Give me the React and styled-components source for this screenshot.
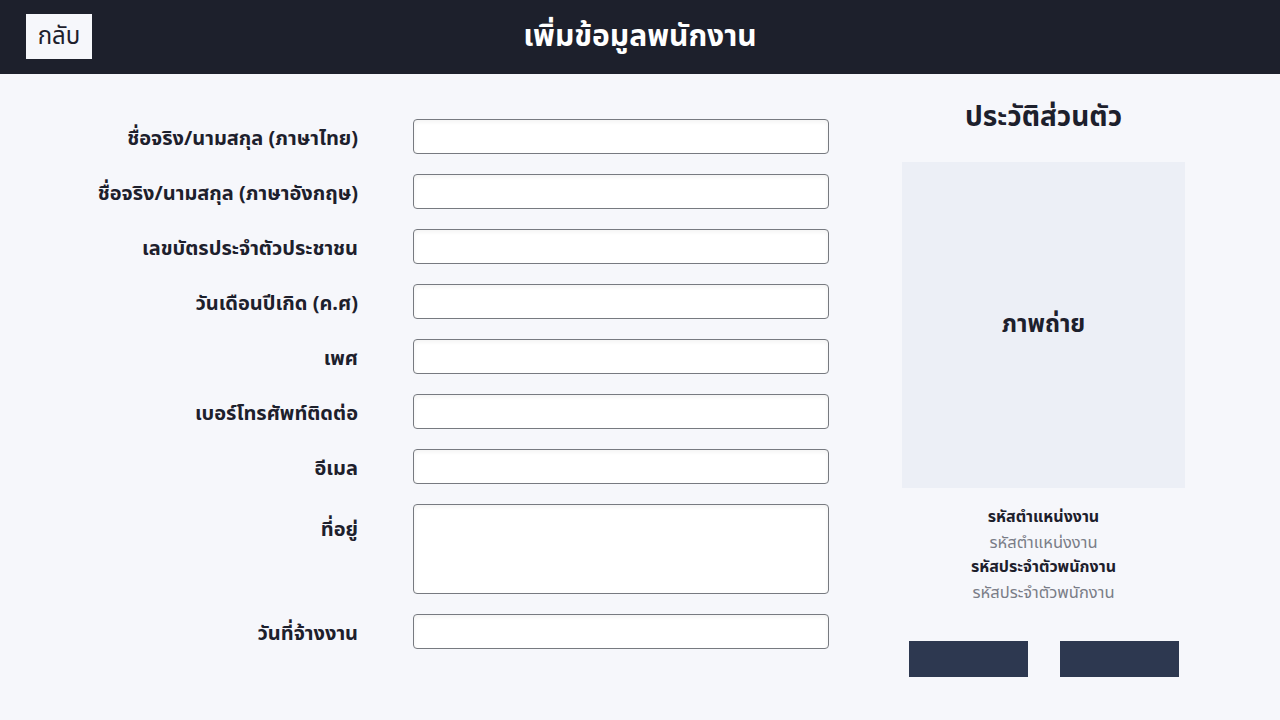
import styled, { createGlobalStyle } from "styled-components";

const GlobalStyle = createGlobalStyle`
  * { box-sizing: border-box; }
  body {
    margin: 0;
    background: #f6f7fb;
    font-family: "Noto Sans Thai", "Noto Sans", "DejaVu Sans", sans-serif;
    color: #1d202c;
  }
`;

const Header = styled.header`
  height: 74px;
  background: #1d202c;
  display: grid;
  grid-template-columns: 1fr auto 1fr;
  align-items: center;
  padding: 0 26px;
`;

const BackButton = styled.button`
  justify-self: start;
  width: 66px;
  height: 45px;
  margin-top: -1px;
  border: none;
  background: #f6f7fb;
  color: #1d202c;
  font-family: inherit;
  font-size: 24px;
  padding: 0;
  cursor: pointer;
`;

const Title = styled.h1`
  margin: 0;
  color: #ffffff;
  font-size: 30px;
  font-weight: 700;
`;

const Main = styled.main`
  display: flex;
  align-items: flex-start;
  padding: 23px 0 0 0;
`;

const Form = styled.form`
  display: grid;
  grid-template-columns: 278px 416px;
  column-gap: 55px;
  row-gap: 20px;
  margin: 22px 0 0 80px;
`;

const Label = styled.label`
  text-align: right;
  font-size: 20px;
  font-weight: 700;
  line-height: 35px;
  height: ${(p) => (p.$top ? "auto" : "35px")};
  padding-top: ${(p) => (p.$top ? "9px" : "3px")};
  align-self: start;
  white-space: nowrap;
`;

const Input = styled.input`
  height: 35px;
  width: 100%;
  border: 1px solid #777a80;
  border-radius: 4px;
  background: #fff;
  box-shadow: inset 0 2px 4px rgba(0, 0, 0, 0.05);
  font-family: inherit;
  font-size: 16px;
  padding: 0 10px;
`;

const TextArea = styled.textarea`
  height: 90px;
  width: 100%;
  border: 1px solid #777a80;
  border-radius: 4px;
  background: #fff;
  box-shadow: inset 0 2px 4px rgba(0, 0, 0, 0.05);
  font-family: inherit;
  font-size: 16px;
  padding: 8px 10px;
  resize: none;
  display: block;
`;

const Profile = styled.aside`
  width: 283px;
  margin-left: 73px;
  display: flex;
  flex-direction: column;
  align-items: center;
`;

const ProfileTitle = styled.h2`
  margin: 0;
  font-size: 28px;
  font-weight: 700;
  line-height: 42px;
`;

const Photo = styled.div`
  margin-top: 23px;
  width: 283px;
  height: 326px;
  background: #eceff6;
  display: flex;
  align-items: center;
  justify-content: center;
  font-size: 24px;
  font-weight: 700;
`;

const Info = styled.div`
  margin-top: 17px;
  display: flex;
  flex-direction: column;
  align-items: center;
`;

const InfoLine = styled.div`
  font-size: ${(p) => (p.$muted ? "16.5px" : "16px")};
  line-height: 25px;
  font-weight: ${(p) => (p.$muted ? 400 : 700)};
  color: ${(p) => (p.$muted ? "#7a7d87" : "#1d202c")};
`;

const Actions = styled.div`
  margin-top: 36px;
  display: flex;
  gap: 32px;
`;

const ActionButton = styled.button`
  width: 119px;
  height: 36px;
  border: none;
  background: #2d3850;
  cursor: pointer;
`;

const fields = [
  "ชื่อจริง/นามสกุล (ภาษาไทย)",
  "ชื่อจริง/นามสกุล (ภาษาอังกฤษ)",
  "เลขบัตรประจำตัวประชาชน",
  "วันเดือนปีเกิด (ค.ศ)",
  "เพศ",
  "เบอร์โทรศัพท์ติดต่อ",
  "อีเมล",
];

export default function App() {
  return (
    <>
      <GlobalStyle />
      <Header>
        <BackButton>กลับ</BackButton>
        <Title>เพิ่มข้อมูลพนักงาน</Title>
        <span />
      </Header>
      <Main>
        <Form>
          {fields.map((f) => (
            <>
              <Label key={f + "l"}>{f}</Label>
              <Input key={f + "i"} />
            </>
          ))}
          <Label $top>ที่อยู่</Label>
          <TextArea />
          <Label>วันที่จ้างงาน</Label>
          <Input />
        </Form>
        <Profile>
          <ProfileTitle>ประวัติส่วนตัว</ProfileTitle>
          <Photo>ภาพถ่าย</Photo>
          <Info>
            <InfoLine>รหัสตำแหน่งงาน</InfoLine>
            <InfoLine $muted>รหัสตำแหน่งงาน</InfoLine>
            <InfoLine>รหัสประจำตัวพนักงาน</InfoLine>
            <InfoLine $muted>รหัสประจำตัวพนักงาน</InfoLine>
          </Info>
          <Actions>
            <ActionButton />
            <ActionButton />
          </Actions>
        </Profile>
      </Main>
    </>
  );
}
